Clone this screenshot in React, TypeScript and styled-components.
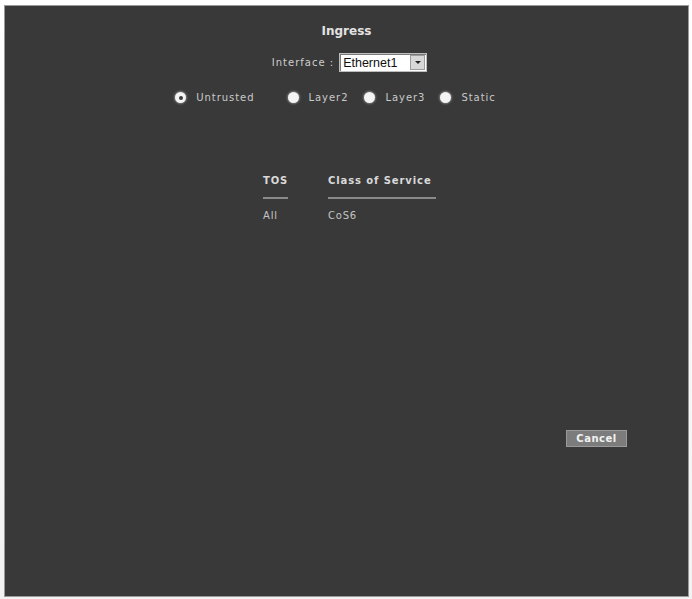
import React from "react";
import styled, { createGlobalStyle } from "styled-components";

const Global = createGlobalStyle`
  html, body { margin: 0; padding: 0; background: #f4f4f4; }
  body { font-family: "DejaVu Sans", Verdana, sans-serif; }
`;

const Frame = styled.div`
  width: 692px;
  height: 599px;
  box-sizing: border-box;
  padding: 5px 3px 2px 4px;
  background: linear-gradient(#ffffff, #f2f2f2);
`;

const Panel = styled.div`
  height: 100%;
  box-sizing: border-box;
  border: 1px solid #9a9a9a;
  background: #393939;
  color: #cfcfcf;
  display: flex;
  flex-direction: column;
  align-items: center;
  padding-top: 18px;
`;

const Title = styled.h1`
  margin: 0;
  font-size: 12px;
  font-weight: bold;
  color: #e2e2e2;
  line-height: 15px;
`;

const InterfaceRow = styled.div`
  margin-top: 14px;
  display: flex;
  align-items: center;
  gap: 5px;
  font-size: 10px;
  letter-spacing: 1px;
  margin-left: 6px;
`;

const Select = styled.div`
  width: 88px;
  height: 19px;
  box-sizing: border-box;
  background: #fff;
  border: 1px solid #bdbdbd;
  box-shadow: inset 1px 1px 0 #7a7a7a;
  display: flex;
  align-items: center;
  justify-content: space-between;
  padding: 0 1px 0 3px;
  font-family: "Liberation Sans", Arial, sans-serif;
  font-size: 12.5px;
  letter-spacing: 0;
  color: #111;
`;

const Arrow = styled.span`
  width: 15px;
  height: 15px;
  background: #d8d8d8;
  border: 1px solid #9c9c9c;
  box-sizing: border-box;
  display: flex;
  align-items: center;
  justify-content: center;
  &::after {
    content: "";
    border-left: 3px solid transparent;
    border-right: 3px solid transparent;
    border-top: 3px solid #222;
  }
`;

const RadioRow = styled.div`
  margin-top: 20px;
  margin-right: 22px;
  display: flex;
  align-items: center;
  font-size: 10px;
  letter-spacing: 0.95px;
  color: #c9c9c9;
`;

const RadioItem = styled.label<{ $gap: number }>`
  display: flex;
  align-items: center;
  gap: 10px;
  margin-right: ${(p) => p.$gap}px;
  &:last-child { margin-right: 0; }
`;

const RadioDot = styled.span<{ $on?: boolean }>`
  width: 11px;
  height: 11px;
  border-radius: 50%;
  background: #f4f4f4;
  box-shadow: 0 0 2px 1px rgba(255, 255, 255, 0.35);
  display: flex;
  align-items: center;
  justify-content: center;
  &::after {
    content: "";
    width: 4px;
    height: 4px;
    border-radius: 50%;
    background: ${(p) => (p.$on ? "#3a3a3a" : "transparent")};
  }
`;

const Table = styled.div`
  margin-top: 72px;
  display: grid;
  grid-template-columns: 25px 108px;
  column-gap: 40px;
  font-size: 10px;
  margin-left: 6px;
`;

const Head = styled.div`
  font-weight: bold;
  color: #dadada;
  letter-spacing: 0.9px;
  white-space: nowrap;
  padding-bottom: 10px;
  border-bottom: 2px solid #8a8a8a;
  line-height: 12px;
`;

const Cell = styled.div`
  padding-top: 11px;
  color: #c4c4c4;
  letter-spacing: 0.8px;
  line-height: 12px;
`;

const Actions = styled.div`
  align-self: stretch;
  display: flex;
  justify-content: flex-end;
  padding-right: 61px;
  margin-top: 208px;
`;

const Button = styled.button`
  width: 61px;
  height: 17px;
  padding: 0;
  background: #7c7c7c;
  border: 1px solid #9a9a9a;
  color: #f2f2f2;
  font-family: "DejaVu Sans", Verdana, sans-serif;
  font-weight: bold;
  font-size: 10px;
  letter-spacing: 0.5px;
  line-height: 15px;
`;

const radios = [
  { label: "Untrusted", on: true, gap: 33 },
  { label: "Layer2", gap: 16 },
  { label: "Layer3", gap: 15 },
  { label: "Static", gap: 0 },
];

export default function App() {
  return (
    <>
      <Global />
      <Frame>
        <Panel>
          <Title>Ingress</Title>
          <InterfaceRow>
            <span>Interface :</span>
            <Select>
              <span>Ethernet1</span>
              <Arrow />
            </Select>
          </InterfaceRow>
          <RadioRow>
            {radios.map((r) => (
              <RadioItem key={r.label} $gap={r.gap}>
                <RadioDot $on={r.on} />
                <span>{r.label}</span>
              </RadioItem>
            ))}
          </RadioRow>
          <Table>
            <Head>TOS</Head>
            <Head>Class of Service</Head>
            <Cell>All</Cell>
            <Cell>CoS6</Cell>
          </Table>
          <Actions>
            <Button>Cancel</Button>
          </Actions>
        </Panel>
      </Frame>
    </>
  );
}
